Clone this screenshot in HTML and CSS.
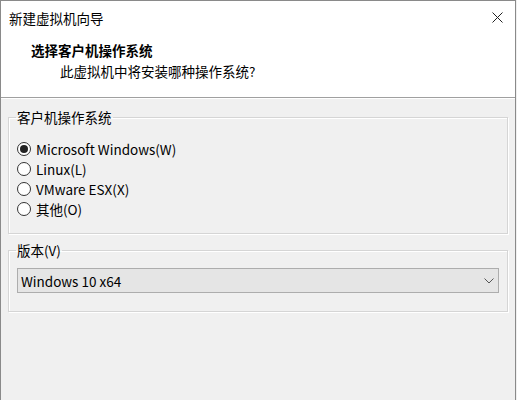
FILE: index.html
```html
<!DOCTYPE html>
<html lang="zh-CN">
<head>
  <meta charset="UTF-8" />
  <title>新建虚拟机向导</title>
  <link rel="stylesheet" href="styles.css">
</head>
<body>
  <div class="janela">
    <div class="barra-titulo">
      <span>新建虚拟机向导</span>
      <svg class="fechar" width="11" height="11" viewBox="0 0 11 11">
        <path d="M0.5 0.5 L10.5 10.5 M10.5 0.5 L0.5 10.5" stroke="#222" stroke-width="1" fill="none" />
      </svg>
    </div>

    <div class="cabecalho">
      <div class="titulo-passo">选择客户机操作系统</div>
      <div class="subtitulo">此虚拟机中将安装哪种操作系统?</div>
    </div>

    <div class="conteudo">
      <fieldset class="grupo grupo-so">
        <legend>客户机操作系统</legend>
        <label class="opcao"><span class="radio marcado"></span>Microsoft Windows(W)</label>
        <label class="opcao"><span class="radio"></span>Linux(L)</label>
        <label class="opcao"><span class="radio"></span>VMware ESX(X)</label>
        <label class="opcao"><span class="radio"></span>其他(O)</label>
      </fieldset>

      <fieldset class="grupo grupo-versao">
        <legend>版本(V)</legend>
        <div class="select">
          <span>Windows 10 x64</span>
          <svg width="10" height="6" viewBox="0 0 10 6">
            <path d="M0.5 0.5 L5 5 L9.5 0.5" stroke="#555" stroke-width="1" fill="none" />
          </svg>
        </div>
      </fieldset>
    </div>
  </div>
</body>
</html>
```

FILE: styles.css
```css
body {
  margin: 0;
  font-family: "Noto Sans CJK SC", "Noto Sans", sans-serif;
  font-size: 13.5px;
  color: #000;
  background: #f0f0f0;
}

.janela {
  width: 516px;
  height: 400px;
  box-sizing: border-box;
  border: 1px solid #8a8a8a;
  border-bottom: none;
  background: #f0f0f0;
}

.barra-titulo {
  height: 33px;
  background: #fff;
  display: flex;
  align-items: center;
  justify-content: space-between;
  padding: 0 12px 0 8px;
  line-height: 20px;
}

.fechar {
  display: block;
}

.cabecalho {
  height: 64px;
  box-sizing: border-box;
  background: #fff;
  padding-top: 6px;
  border-bottom: 1px solid #a0a0a0;
  box-shadow: 0 1px 0 #fff;
  line-height: 20px;
}

.titulo-passo {
  padding-left: 30px;
  font-weight: bold;
}

.subtitulo {
  padding-left: 59px;
  margin-top: 1px;
}

.conteudo {
  padding: 9px 7px 0 7px;
}

.grupo {
  margin: 0;
  border: 1px solid #d5d5d5;
  box-shadow: inset 1px 1px 0 #fff, 1px 1px 0 #fff;
  padding: 0 8px;
}

.grupo legend {
  padding: 0 1px;
  margin-left: -1px;
  line-height: 20px;
}

.grupo-so {
  padding-top: 12px;
  padding-bottom: 14px;
}

.grupo-versao {
  margin-top: 6px;
  padding-top: 8px;
  padding-bottom: 18px;
}

.opcao {
  display: flex;
  align-items: center;
  height: 20px;
  gap: 5px;
}

.radio {
  width: 14px;
  height: 14px;
  box-sizing: border-box;
  border: 1px solid #333;
  border-radius: 50%;
  background: #fff;
  display: flex;
  align-items: center;
  justify-content: center;
}

.radio.marcado::after {
  content: "";
  width: 8px;
  height: 8px;
  border-radius: 50%;
  background: #222;
}

.select {
  height: 25px;
  box-sizing: border-box;
  border: 1px solid #adadad;
  background: #e5e5e5;
  display: flex;
  align-items: center;
  justify-content: space-between;
  padding: 0 4px 0 3px;
}
```
